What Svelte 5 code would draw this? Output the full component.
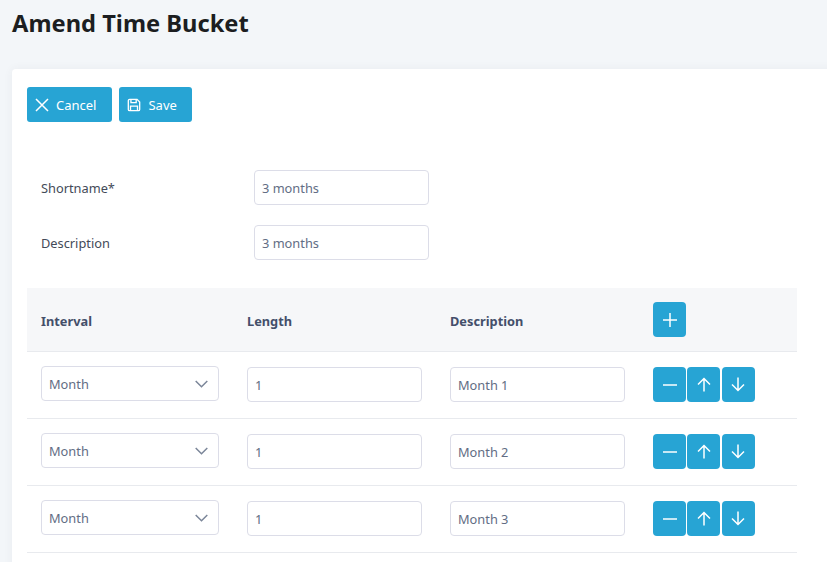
<script lang="ts">
const rows = [
	{ interval: "Month", length: "1", description: "Month 1" },
	{ interval: "Month", length: "1", description: "Month 2" },
	{ interval: "Month", length: "1", description: "Month 3" },
];
</script>

<div class="page">
  <h1>Amend Time Bucket</h1>
  <div class="card">
    <div class="toolbar">
      <button class="btn">
        <svg class="x" width="14" height="14" viewBox="0 0 14 14"><path d="M1 1l12 12M13 1L1 13" /></svg>
        Cancel
      </button>
      <button class="btn">
        <svg width="14" height="14" viewBox="0 0 16 16"><path d="M1.500 3a1.500 1.500 0 0 1 1.500-1.500h8.500l3 3V13a1.500 1.500 0 0 1-1.500 1.500H3A1.500 1.500 0 0 1 1.500 13zM4.500 1.500v3.800h6V1.500M4 14.500V9.200h8v5.300" /></svg>
        Save
      </button>
    </div>

    <div class="form">
      <label for="shortname">Shortname*</label>
      <input id="shortname" class="field" value="3 months" />
      <label for="description">Description</label>
      <input id="description" class="field" value="3 months" />
    </div>

    <div class="table">
      <div class="row head">
        <div>Interval</div>
        <div>Length</div>
        <div>Description</div>
        <div class="actions">
          <button class="icon-btn" aria-label="Add">
            <svg width="16" height="16" viewBox="0 0 16 16"><path d="M8 1v14M1 8h14" /></svg>
          </button>
        </div>
      </div>
      {#each rows as row}
        <div class="row">
          <div class="select">
            <span>{row.interval}</span>
            <svg width="13" height="8" viewBox="0 0 13 8"><path d="M.7 1l5.800 5.800L12.300 1" /></svg>
          </div>
          <input class="field" value={row.length} />
          <input class="field" value={row.description} />
          <div class="actions">
            <button class="icon-btn" aria-label="Remove">
              <svg width="16" height="16" viewBox="0 0 16 16"><path d="M1 8h14" /></svg>
            </button>
            <button class="icon-btn" aria-label="Up">
              <svg width="14" height="15" viewBox="0 0 14 15"><path d="M7 14.500V1.500M1 7.500l6-6 6 6" /></svg>
            </button>
            <button class="icon-btn" aria-label="Down">
              <svg width="14" height="15" viewBox="0 0 14 15"><path d="M7 .5v13M1 7.500l6 6 6-6" /></svg>
            </button>
          </div>
        </div>
      {/each}
    </div>
  </div>
</div>

<style>
  :global(body) {
    margin: 0;
    background: #f3f6f9;
    font-family: "Noto Sans", sans-serif;
    overflow: hidden;
  }
  .page {
    height: 562px;
    overflow: hidden;
    padding-left: 12px;
  }
  h1 {
    margin: 0;
    padding-top: 7px;
    height: 69px;
    box-sizing: border-box;
    font-size: 23.7px;
    line-height: 33px;
    font-weight: 700;
    color: #1c1e21;
  }
  .card {
    background: #fff;
    border-radius: 4px 0 0 0;
    padding: 18px 15px;
    height: 600px;
    box-shadow: 0 0 10px rgba(60, 70, 90, 0.06);
    margin-right: -10px;
  }
  .toolbar {
    display: flex;
    gap: 7px;
  }
  .btn {
    display: flex;
    align-items: center;
    gap: 7px;
    height: 35px;
    padding: 0 15px 0 8px;
    background: #27a4d4;
    color: #fff;
    border: 0;
    border-radius: 3px;
    font: 13px "Noto Sans", sans-serif;
  }
  .btn:first-child {
    padding-right: 16px;
  }
  svg {
    fill: none;
    stroke: currentColor;
    stroke-width: 1.5;
  }
  .form {
    display: grid;
    grid-template-columns: 213px 175px;
    row-gap: 20px;
    align-items: center;
    padding: 48px 0 28px 14px;
  }
  label {
    font-size: 12.8px;
    color: #434a58;
  }
  .field {
    box-sizing: border-box;
    width: 175px;
    height: 35px;
    padding: 0 7px;
    border: 1px solid #dcdde8;
    border-radius: 4px;
    background: #fff;
    color: #626d84;
    font: 12.8px "Noto Sans", sans-serif;
    outline: none;
  }
  .table {
    width: 770px;
  }
  .row {
    display: grid;
    grid-template-columns: 206px 203px 203px 144px;
    align-items: center;
    height: 67px;
    box-sizing: border-box;
    padding: 0 0 1px 14px;
    border-bottom: 1px solid #e8eaee;
  }
  .head {
    height: 64px;
    padding-bottom: 0;
    background: #f6f7f9;
    font-size: 12.8px;
    font-weight: 700;
    color: #444f6a;
  }
  .head > div:not(.actions) {
    padding-top: 2px;
  }
  .select {
    box-sizing: border-box;
    width: 178px;
    height: 35px;
    display: flex;
    align-items: center;
    justify-content: space-between;
    padding: 0 10px 0 7px;
    margin-top: -2px;
    border: 1px solid #dcdde8;
    border-radius: 4px;
    color: #626d84;
    font-size: 12.8px;
  }
  .select svg {
    color: #7b8699;
  }
  .actions {
    display: flex;
    gap: 1.4px;
  }
  .icon-btn {
    display: flex;
    align-items: center;
    justify-content: center;
    width: 33px;
    height: 35px;
    padding: 0;
    border: 0;
    border-radius: 4px;
    background: #27a4d4;
    color: #fff;
  }
</style>
